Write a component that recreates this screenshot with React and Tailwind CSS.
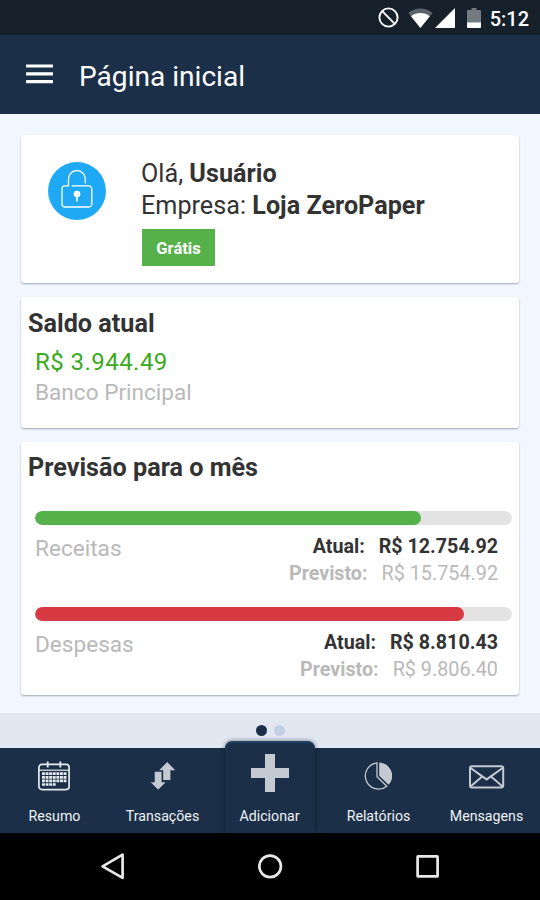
import React from 'react';
import clsx from 'clsx';

const StatusBar = () => (
  <div className="flex h-[35px] items-center justify-end bg-[#15202b] pr-[11px] text-white">
    <svg className="mr-[9px]" width="21" height="21" viewBox="0 0 21 21" fill="none" stroke="currentColor">
      <circle cx="10.5" cy="10.5" r="9.1" strokeWidth="1.9" />
      <path d="M4.2 4.2L16.8 16.8" strokeWidth="1.9" />
    </svg>
    <svg className="mr-[2px]" width="25" height="20" viewBox="0 0 25 20">
      <path d="M0.3 4.9C3.7 1.9 8 0.4 12.4 0.4S21.1 1.9 24.5 4.9L12.4 20z" fill="#5b646c" />
      <path d="M3 8.2C5.7 6 9 4.9 12.4 4.9S19.1 6 21.8 8.2L12.4 20z" fill="#fff" />
    </svg>
    <svg className="mr-[12px]" width="20" height="20" viewBox="0 0 20 20">
      <path d="M20 0V20H0z" fill="#fff" />
    </svg>
    <svg className="mr-[9px]" width="14" height="20" viewBox="0 0 14 20">
      <path d="M4.5 0h5v2H13a1 1 0 0 1 1 1v12H0V3a1 1 0 0 1 1-1h3.5z" fill="#737a80" />
      <path d="M0 14.5h14V19a1 1 0 0 1-1 1H1a1 1 0 0 1-1-1z" fill="#fff" />
    </svg>
    <span className="pt-[3px] text-[20px] leading-6 font-medium">5:12</span>
  </div>
);

const Header = () => (
  <header className="flex h-[79px] items-center bg-[#1b3048] pl-[26px] text-white">
    <svg className="mb-[2px]" width="27" height="20" viewBox="0 0 27 20" fill="currentColor">
      <rect y="0.4" width="27" height="3.2" rx="0.5" />
      <rect y="8.2" width="27" height="3.2" rx="0.5" />
      <rect y="16" width="27" height="3.2" rx="0.5" />
    </svg>
    <h1 className="ml-[26px] pt-[4px] text-[28.1px] leading-8">Página inicial</h1>
  </header>
);

const Card = ({ className, children }) => (
  <section className={clsx('rounded-[3px] bg-white shadow-[0_1px_2px_rgba(60,70,90,0.45)]', className)}>
    {children}
  </section>
);

const LockBadge = () => (
  <svg className="mt-[27px] shrink-0" width="58" height="58" viewBox="0 0 58 58">
    <circle cx="29" cy="29" r="29" fill="#1fa9f5" />
    <g fill="none" stroke="#fff" strokeWidth="1.3">
      <path d="M37.3 21.2V16.9a8.4 8.4 0 0 0-16.8 0V23.9H17a3 3 0 0 0-3 3V42a3 3 0 0 0 3 3H40.8a3 3 0 0 0 3-3V26.9a3 3 0 0 0-3-3H23.7" />
      <path d="M29 33V39.6" strokeWidth="1.6" />
    </g>
    <circle cx="29" cy="32" r="3.3" fill="#fff" />
  </svg>
);

const Forecast = ({ label, atual, previsto, percent, barClassName }) => (
  <div className="h-[96px]">
    <div className="ml-[14px] mr-[7px] h-[14px] overflow-hidden rounded-full bg-[#e3e3e3]">
      <div className={clsx('h-full rounded-full', barClassName)} style={{ width: `${percent}%` }} />
    </div>
    <div className="flex justify-between pl-[14px] pr-[21px]">
      <span className="pt-[10px] text-[22.6px] leading-[28px] text-[#b9b9b9]">{label}</span>
      <div className="pt-[8px] text-right text-[19.7px] leading-[27px]">
        <div className="font-bold text-[#333]">
          <span className="mr-[14px]">Atual:</span>
          {atual}
        </div>
        <div className="text-[#b9b9b9]">
          <span className="mr-[14px] font-bold">Previsto:</span>
          <span className="text-[19.8px]">{previsto}</span>
        </div>
      </div>
    </div>
  </div>
);

const CalendarIcon = () => (
  <svg width="32" height="30" viewBox="0 0 32 30" fill="none" stroke="#e6eaee">
    <rect x="0.9" y="3.4" width="30.2" height="25.2" rx="3" strokeWidth="1.7" />
    <path d="M1 9.2H31" strokeWidth="1.2" />
    <path d="M9.7 0.4V6.4M22.3 0.4V6.4" strokeWidth="1.8" />
    <path d="M4 12.7H28.5M4 16.3H28.5M4 19.9H28.5M4 23.5H18" strokeWidth="2.7" strokeDasharray="2.9 0.7" />
  </svg>
);

const TransferIcon = () => (
  <svg className="ml-px" width="26" height="28" viewBox="0 0 26 28" fill="#c5c9d1">
    <path d="M17.2 0L25.2 8.2H20.4V18H13.2V8.2H9.2z" />
    <path d="M4.4 9.4H11.9V20H16.2L8.2 28L0.2 20H4.4z" stroke="#1b3048" strokeWidth="0.6" />
  </svg>
);

const PieIcon = () => (
  <svg width="28" height="28" viewBox="0 0 28 28">
    <path d="M13 0.8A13.2 13.2 0 1 0 22.8 24.2L13 14.8z" fill="none" stroke="#c5c9d1" strokeWidth="1.3" />
    <path d="M15.2 0.4A13.4 13.4 0 0 1 24.6 22.8L15.2 13.7z" fill="#c5c9d1" />
  </svg>
);

const MailIcon = () => (
  <svg className="ml-px mt-px" width="36" height="24" viewBox="0 0 36 24" fill="none" stroke="#c5c9d1" strokeWidth="2">
    <rect x="1" y="1.3" width="33.2" height="21.2" rx="2" />
    <path d="M1.6 3L17.6 14.4L33.6 3M1.6 21.4L13.2 11.6M33.6 21.4L22 11.6" />
  </svg>
);

const Tab = ({ label, children }) => (
  <div className="flex w-[108px] flex-col items-center">
    <div className="flex h-[56px] items-center justify-center">{children}</div>
    <span className="mt-[2px] pl-px text-[14.2px] leading-5 text-[#eef0f3]">{label}</span>
  </div>
);

const TabBar = () => (
  <nav className="flex h-[85px] bg-[#1b3048]">
    <Tab label="Resumo">
      <CalendarIcon />
    </Tab>
    <Tab label="Transações">
      <TransferIcon />
    </Tab>
    <div className="flex w-[108px] justify-center">
      <div className="-mt-[7px] flex h-[92px] w-[90px] flex-col items-center rounded-t-[7px] border-t-2 border-[#1f4568] bg-[#1b3048] pt-[11px] shadow-[0_0_5px_rgba(0,0,0,0.5)] [clip-path:inset(-8px_-8px_0_-8px)]">
        <svg width="38" height="38" viewBox="0 0 38 38">
          <path d="M14 0H24V14H38V24H24V38H14V24H0V14H14z" fill="#c5c9d1" />
        </svg>
        <span className="mt-[14px] pr-px text-[14.2px] leading-5 text-[#eef0f3]">Adicionar</span>
      </div>
    </div>
    <Tab label="Relatórios">
      <PieIcon />
    </Tab>
    <Tab label="Mensagens">
      <MailIcon />
    </Tab>
  </nav>
);

const SystemNav = () => (
  <div className="flex h-[67px] justify-between bg-black pl-[101px] pr-[101px] pt-[20px]">
    <svg width="24" height="27" viewBox="0 0 24 27" fill="none" stroke="#e8e8e8" strokeWidth="2.7" strokeLinejoin="round">
      <path d="M1.6 13.3L21.6 1.7V24.8z" />
    </svg>
    <svg width="26" height="27" viewBox="0 0 26 27" fill="none" stroke="#e8e8e8" strokeWidth="2.7">
      <circle cx="12.1" cy="13.4" r="10.8" />
    </svg>
    <svg width="23" height="27" viewBox="0 0 23 27" fill="none" stroke="#e8e8e8" strokeWidth="2.7">
      <rect x="1.6" y="3.4" width="20" height="20" rx="0.5" />
    </svg>
  </div>
);

const App = () => (
  <div className="flex h-[900px] w-[540px] flex-col overflow-hidden bg-[#f2f7ff] font-['Roboto',sans-serif] text-[#333]">
    <StatusBar />
    <Header />
    <main className="flex h-[599px] flex-col px-[21px] pt-[21px]">
      <Card className="flex h-[148px] pl-[27px]">
        <LockBadge />
        <div className="ml-[35px] pt-[23px] text-[25.2px] leading-[32px]">
          <div>
            Olá, <b>Usuário</b>
          </div>
          <div>
            Empresa: <b>Loja ZeroPaper</b>
          </div>
          <div className="ml-px mt-[7px] flex h-[37px] w-[73px] items-center justify-center bg-[#56b14a] pt-[2px] text-[16.5px] leading-5 font-bold text-white">
            Grátis
          </div>
        </div>
      </Card>
      <Card className="mt-[14px] h-[131px] pl-[7px] pt-[11px]">
        <h2 className="text-[25.2px] leading-[32px] font-bold">Saldo atual</h2>
        <div className="ml-[7px] mt-[7px] text-[24px] leading-[30px] tracking-[0.45px] text-[#3aaa1e]">R$ 3.944.49</div>
        <div className="ml-[7px] mt-px text-[22.6px] leading-[30px] text-[#b9b9b9]">Banco Principal</div>
      </Card>
      <Card className="mt-[14px] h-[253px] pt-[10px]">
        <h2 className="mb-[27px] pl-[7px] text-[25.2px] leading-[32px] font-bold">Previsão para o mês</h2>
        <Forecast
          label="Receitas"
          atual="R$ 12.754.92"
          previsto="R$ 15.754.92"
          percent={80.9}
          barClassName="bg-[#56b14a]"
        />
        <Forecast
          label="Despesas"
          atual="R$ 8.810.43"
          previsto="R$ 9.806.40"
          percent={89.9}
          barClassName="bg-[#d73a43]"
        />
      </Card>
    </main>
    <div className="flex h-[35px] items-center justify-center gap-[7px] bg-[#e2e8f2]">
      <span className="size-[11px] rounded-full bg-[#1b3048]" />
      <span className="size-[11px] rounded-full bg-[#c1d0e4]" />
    </div>
    <TabBar />
    <SystemNav />
  </div>
);

export default App;
